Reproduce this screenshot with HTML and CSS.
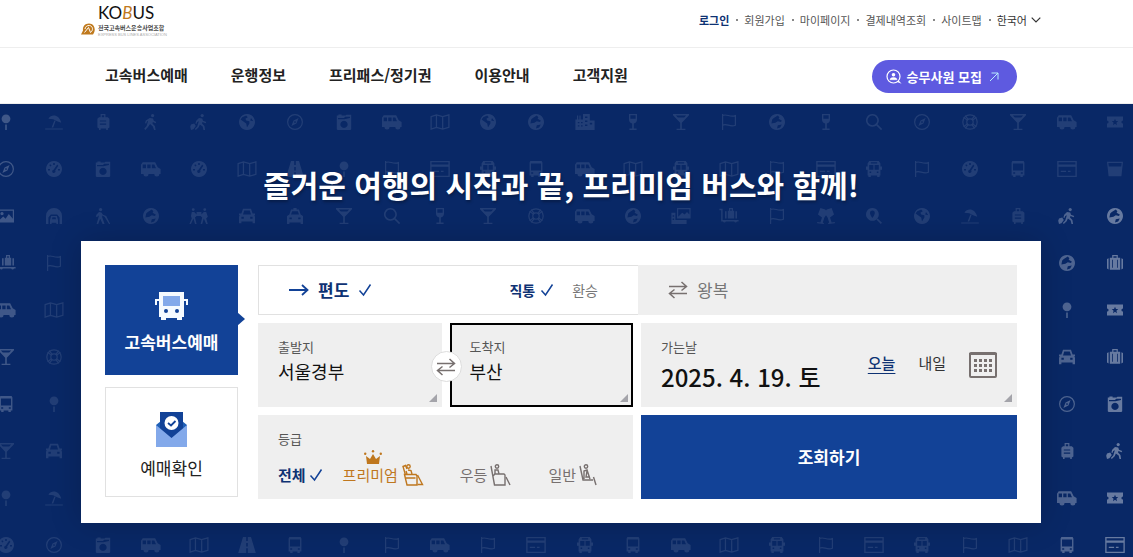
FILE: index.html
```html
<!DOCTYPE html>
<html lang="ko">
<head>
    <meta charset="UTF-8">
    <meta name="viewport" content="width=device-width, initial-scale=1.0">
    <title>고속버스통합예매</title>
    <link rel="stylesheet" href="styles.css">
</head>
<body>
    <!-- 공통 아이콘 -->
    <svg class="sprite" aria-hidden="true">
        <symbol id="i-check" viewBox="0 0 14 14"><path d="M1.5 7.500l4 4.500L12.500 1.500" fill="none" stroke="currentColor" stroke-width="1.500"/></symbol>
        <symbol id="i-arrow" viewBox="0 0 20 14"><path d="M0 7h18M13 2l5.500 5L13 12" fill="none" stroke="currentColor" stroke-width="1.800"/></symbol>
        <symbol id="i-swap" viewBox="0 0 20 18"><path d="M1 5.500h17M13.500 1l5 4.500-5 4M19 12.500H2M6.500 8.500l-5 4 5 4.500" fill="none" stroke="currentColor" stroke-width="1.500"/></symbol>

        <symbol id="pin" viewBox="0 0 20 20"><circle cx="10" cy="6" r="5.500"/><path d="M9 13h2v7H9z"/></symbol>
        <symbol id="parasol" viewBox="0 0 22 20"><path d="M4 6c4-7 14-5 16 5l-5-2-5-2.500zM11.500 8l1.500.5L10 17H8zM0 18h22v1.500H0z"/></symbol>
        <symbol id="suitcase" viewBox="0 0 20 20"><path d="M7 4V0h6v4h3l2 2v11l-2 1v2h-2v-2H7v2H5v-2l-2-1V6l2-2zm1.500 0h3V1.500h-3zM6 8v1.500h8V8zm0 4v1.500h8V12z" fill-rule="evenodd"/></symbol>
        <symbol id="walk" viewBox="0 0 20 20"><circle cx="12" cy="2" r="2"/><path d="M8.500 5l4 .5 1 3 3 1.500-.7 1.500-3.500-1.500-.5 2 3 3 1 5h-2l-1.500-4.500-3.500-3L6.500 16 3 20l-1.500-1.500 3-3.500 2-6.500-1.500 1-1 2.500-1.500-.5 1-3.500z"/></symbol>
        <symbol id="hiker" viewBox="0 0 22 20"><circle cx="15" cy="2" r="2"/><path d="M11 5l4 .5 1 3L20 10l-.7 1.500-4-1.500-.5 2 3 3 .8 5h-2l-1-4.300-3.500-2.700-1.500 3.500L7 20l-1.200-1.200 3-3.300 2-6.500-2 1-1 2.500L6.500 12l1-3.500zM1 13l4-1 2 3-3 4-3 1-1-4z"/></symbol>
        <symbol id="globe" viewBox="0 0 20 20"><path d="M10 0a10 10 0 1 0 .01 0zM4 4l5-2 2 2-3 2 1 2 4 1v3l-3 5-1-5-4-3-3-2zM15 5l3 4-4-1z" fill-rule="evenodd"/></symbol>
        <symbol id="earth" viewBox="0 0 20 20"><path d="M10 0a10 10 0 1 0 .01 0zM6 5l5-3 2 2-1 2 4 2-1 2-4-1-3 2-5 1 1-5zM11 14l5-1-2 4-4 1z" fill-rule="evenodd"/></symbol>
        <symbol id="compass" viewBox="0 0 20 20"><circle cx="10" cy="10" r="9.200" fill="none" stroke="currentColor" stroke-width="1.500"/><path d="M14.500 5l-2.700 7L5.500 15l2.700-7zM10 9a1 1 0 1 0 .01 0z" fill-rule="evenodd"/></symbol>
        <symbol id="camera" viewBox="0 0 20 20"><path d="M1 2h2V.5h4V2h5l1-1h6v18l-1 1H2l-1-1zm1.500 3v1.500h8l7-1.500V3.500h-6L10 5zM10 8.500a4.500 4.500 0 1 0 .01 0z" fill-rule="evenodd"/></symbol>
        <symbol id="van" viewBox="0 0 24 18"><path d="M2 1h15l3 6 3.500 2v6H22a3 3 0 0 1-6 0H9a3 3 0 0 1-6 0H0V4zm0 2.500V8h4V3.500zm5.500 0V8h4V3.500zm5.500 0V8h5l-2-4.500z" fill-rule="evenodd"/></symbol>
        <symbol id="map" viewBox="0 0 22 18"><path d="M1 3l6-2 7 2 7-2v14l-7 2-7-2-6 2zM7 1v14M14 3v14" fill="none" stroke="currentColor" stroke-width="1.400"/></symbol>
        <symbol id="city" viewBox="0 0 24 20"><path d="M0 7h2V2h1.500v5H5V2h1.500v5h3V0H18v8h6v12H0zm3 3v1.500h2V10zm4 0v1.500h2V10zm-4 4v1.500h2V14zm4 0v1.500h2V14zm5-11v2h3V3zm0 5v2h3V8zm0 5v2h3v-2zm6-2v2h3v-2z" fill-rule="evenodd"/></symbol>
        <symbol id="wine" viewBox="0 0 20 20"><path d="M5 0h10v7c0 3-1.700 4.500-4 5v6h3.500v2h-9v-2H9v-6c-2.300-.5-4-2-4-5zM6.700 1.500V6h6.600V1.500z" fill-rule="evenodd"/></symbol>
        <symbol id="cocktail" viewBox="0 0 20 20"><path d="M0 0h20v1.500L11 11v7.500h4.500V20h-11v-1.500H9V11L0 1.500zm3.500 1.800L6 4.500h8l2.500-2.700z" fill-rule="evenodd"/></symbol>
        <symbol id="flag" viewBox="0 0 20 20"><path d="M2 0v20M2 2c5-3 9 3 16 0v12c-7 3-11-3-16 0" fill="none" stroke="currentColor" stroke-width="1.500"/></symbol>
        <symbol id="search" viewBox="0 0 20 20"><path d="M8 1a7 7 0 1 0 .01 0zM13 13l6.500 6.500" fill="none" stroke="currentColor" stroke-width="2"/></symbol>
        <symbol id="findpin" viewBox="0 0 20 20"><path d="M8 0a8 8 0 1 0 .01 0zM8 3a3 3 0 0 1 3 3C11 9 8 12.500 8 12.500S5 9 5 6a3 3 0 0 1 3-3zM13 14.500l1.500-1.500 5.500 5.500-1.500 1.500z" fill-rule="evenodd"/></symbol>
        <symbol id="ring" viewBox="0 0 20 20"><g fill="none" stroke="currentColor" stroke-width="1.500"><circle cx="10" cy="10" r="9"/><circle cx="10" cy="10" r="4"/><path d="M2 4l5 4M4 2l4 5M18 4l-5 4M16 2l-4 5M2 16l5-4M4 18l4-5M18 16l-5-4M16 18l-4-5"/></g></symbol>
        <symbol id="ticket" viewBox="0 0 20 20"><path d="M0 3h20v5a2 2 0 0 0 0 4v5H0v-5a2 2 0 0 0 0-4zm10 3L8.800 8.800H6l2.200 2L7.500 14l2.500-1.700 2.500 1.700-.7-3.200 2.200-2h-2.800z" fill-rule="evenodd"/></symbol>
        <symbol id="gauge" viewBox="0 0 20 20"><path d="M10 0a10 10 0 1 0 .01 0zM9 2.500V5h2V2.500zM4 5l1.500 2L7 6 5.500 4zM2.500 10v2H5v-2zM15 10v2h2.500v-2zM14 4.500L9.500 11a2 2 0 1 0 2 1L15.500 6z" fill-rule="evenodd"/></symbol>
        <symbol id="road" viewBox="0 0 22 20"><path d="M6 0h4v5h2V0h4l6 20H12v-6h-2v6H0zM10 7.500V12h2V7.500z" fill-rule="evenodd"/></symbol>
        <symbol id="card" viewBox="0 0 22 18"><path d="M0 0h22v18H0zm1.500 1.500V4h19V1.500zm0 5v10h19v-10zM4 11h6v1.500H4zm8 0h3v1.500h-3z" fill-rule="evenodd"/></symbol>
        <symbol id="bus" viewBox="0 0 20 20"><path d="M4 0h12l2 3v4h2v4h-2v7h-1v2h-3v-2H6v2H3v-2H2v-7H0V7h2V3zm2 1.500V3h8V1.500zM4 5v6h5.300V5zm6.700 0v6H16V5zM4.500 13v2h2v-2zm9 0v2h2v-2z" fill-rule="evenodd"/></symbol>
        <symbol id="tram" viewBox="0 0 20 20"><path d="M3 0h14l1 2v16h-2v2h-3v-2H7v2H4v-2H2V2zm.7 3v9h12.600V3zM4 14v2h2.500v-2zm9.500 0v2H16v-2z" fill-rule="evenodd"/></symbol>
        <symbol id="basket" viewBox="0 0 20 20"><path d="M0 1h20l-2 18H2zm1.700 1.500L2.200 7h15.600l.5-4.500z" fill-rule="evenodd"/></symbol>
        <symbol id="picture" viewBox="0 0 20 20"><path d="M0 2h20v16H0zm1.500 1.500v12l5-5 3 3 4-6 5 6v-10zM5 5a2 2 0 1 0 .01 0z" fill-rule="evenodd"/></symbol>
        <symbol id="photos" viewBox="0 0 24 20"><path d="M7 0h17v13H7zm1.500 1.500V11l5-5 3 2 3-3 3 3V1.500zM0 6h5v9h14v5H0zm1.500 3v2h2V9zm0 4v2h2v-2z" fill-rule="evenodd"/></symbol>
        <symbol id="tunnel" viewBox="0 0 20 20"><path d="M0 20V10a10 10 0 0 1 20 0v10h-3v-8l-3-4H6l-3 4v8zM5 20v-5l1.500-5h7l1.500 5v5h-2v-1.500H7V20zm3-8.500L7.500 14h5l-.5-2.500z" fill-rule="evenodd"/></symbol>
        <symbol id="cane" viewBox="0 0 20 20"><circle cx="7" cy="2" r="2"/><path d="M5 5l3 .5 2 3 4 1.500 5 10h-1.500L12 11l-3-1.500v2l3 8.500H9.500L6.500 13.500 4 20H2l2-7 1-4-2 2H1l1-3z"/></symbol>
        <symbol id="friends" viewBox="0 0 24 20"><path d="M3 2a1.800 1.800 0 1 0 3.600 0A1.800 1.800 0 1 0 3 2zM17.400 2A1.800 1.800 0 1 0 21 2a1.800 1.800 0 1 0-3.600 0zM3 5h3l3 3V5h6v3l3-3h3l2 6-2 2 2 7h-2l-3-7-2 7h-2l2-8-2-2H9l-2 2 2 8H7l-2-7-3 7H0l3-7-1-3z"/></symbol>
        <symbol id="car" viewBox="0 0 20 20"><path d="M5 1h10l2 6h3v2h-1l1 2v8h-3v-2H3v2H0v-8l1-2H0V7h3zm1.500 2L5 8h10l-1.500-5zM3 11v2.500h3V11zm11 0v2.500h3V11z" fill-rule="evenodd"/></symbol>
        <symbol id="taxi" viewBox="0 0 20 20"><path d="M8 0h4v2h3l2 6 3 2v10h-3v-2H3v2H0V10l3-2 2-6h3zM6.500 4L5 8h10l-1.500-4zM3 12v2h3v-2zm11 0v2h3v-2z" fill-rule="evenodd"/></symbol>
        <symbol id="cart" viewBox="0 0 24 20"><path d="M0 1h4v14h20v1.800h-2a1.800 1.800 0 0 1-3.500 0H8a1.800 1.800 0 0 1-3.500 0H2.200V2.800H0zM7 4h2v9H7zm3.500-.5H12V0h5v3.500h1.500V13h-8zM13.500 1.500v2h2v-2zM20 4h2v9h-2z" fill-rule="evenodd"/></symbol>
        <symbol id="toast" viewBox="0 0 24 20"><path d="M5 0l6 2 1 1 1-1 6-2 3 8-5 4 2 6 4-.5V19l-8 1-.5-1 1.500-1-2-6-2-3-2 3-2 6 1.500 1-.5 1-8-1v-1.500l4 .5 2-6-5-4z"/></symbol>
        <symbol id="luggage" viewBox="0 0 20 20"><path d="M0 5l2-1v14l-2-1zM3.500 3.500h3V0h7v3.500h3v15h-13zM8 1.500v2h4v-2zM18 4l2 1v12l-2 1zM6.500 6v10h1V6zm6 0v10h1V6z" fill-rule="evenodd"/></symbol>
    </svg>

    <header class="header">
        <div class="header-top wrap">
            <a class="logo" href="#" aria-label="KOBUS 전국고속버스운송사업조합">
                <svg class="logo-mark" viewBox="0 0 14 12"><path d="M0 11.500h12C15.500 7 13.500.5 8 .5 3.500.5 1.500 4 2 7.500z" fill="#c07a1e"/><path d="M3.500 9.500L7.500 4.500 9.500 9.500C12.500 7.500 12 3 8.500 2.500 6 2.200 4.200 4 4 6" fill="none" stroke="#fff"/></svg>
                <span class="logo-text">
                    <strong class="logo-name">KO<em>B</em>US</strong>
                    <span class="logo-sub">전국고속버스운송사업조합</span>
                    <span class="logo-eng">EXPRESS BUS LINES ASSOCIATION</span>
                </span>
            </a>
            <ul class="util">
                <li><a class="login" href="#">로그인</a></li>
                <li><a href="#">회원가입</a></li>
                <li><a href="#">마이페이지</a></li>
                <li><a href="#">결제내역조회</a></li>
                <li><a href="#">사이트맵</a></li>
                <li><button class="lang" type="button">한국어 <svg viewBox="0 0 10 6"><path d="M.7.7L5 5 9.300.7" fill="none" stroke="#333" stroke-width="1.200"/></svg></button></li>
            </ul>
        </div>
        <div class="header-nav">
            <nav class="gnb wrap">
                <ul>
                    <li><a href="#">고속버스예매</a></li>
                    <li><a href="#">운행정보</a></li>
                    <li><a href="#">프리패스/정기권</a></li>
                    <li><a href="#">이용안내</a></li>
                    <li><a href="#">고객지원</a></li>
                </ul>
                <a class="recruit" href="#">
                    <svg class="recruit-user" viewBox="0 0 16 16"><circle cx="7.500" cy="7.500" r="6.500" fill="none" stroke="#fff" stroke-width="1.200"/><circle cx="7.500" cy="5.700" r="1.800" fill="#fff"/><path d="M4 10.700c0-3 7-3 7 0zM11 13l1.500-1.500 2.500 3" fill="#fff" stroke="#fff" stroke-width=".5"/></svg>
                    승무사원 모집
                    <svg class="recruit-go" viewBox="0 0 10 10"><path d="M1 9L9 1M2.500 1H9v6.500" fill="none" stroke="#b9ecff"/></svg>
                </a>
            </nav>
        </div>
    </header>

    <main class="hero">
        <div class="pattern" id="pattern" aria-hidden="true"></div>
        <h1>즐거운 여행의 시작과 끝, 프리미엄 버스와 함께!</h1>

        <div class="panel wrap">
            <div class="tabs">
                <button class="tab active" type="button">
                    <svg class="tab-bus" viewBox="0 0 33 29"><path d="M4 0h25v25h-2v3h-5v-2H11v2H6v-3H4zM0 7h4v2H2v4H0zM29 7h4v6h-2V9h-2z" fill="#f5faff"/><path d="M8 4h17v10H8z" fill="#83a9ea"/><circle cx="11" cy="19" r="2" fill="#124297"/><circle cx="22" cy="19" r="2" fill="#124297"/></svg>
                    고속버스예매
                </button>
                <button class="tab" type="button">
                    <svg class="tab-mail" viewBox="0 0 31 36"><path d="M0 14l5-4h21l5 4v22H0z" fill="#1f5fb5"/><path d="M4 1h23v19L15.500 30 4 20z" fill="#124297"/><path d="M0 14l15.500 13L31 14v22H0z" fill="#83a9ea"/><circle cx="15.500" cy="12" r="7" fill="#fff"/><path d="M12 12l3 2.500 4.500-4.500" fill="none" stroke="#124297" stroke-width="1.800"/></svg>
                    예매확인
                </button>
            </div>

            <form class="booking">
                <div class="trip">
                    <div class="oneway">
                        <label class="trip-type on"><input type="radio" name="trip" checked><svg class="ico-arrow"><use href="#i-arrow"/></svg>편도<svg class="ico-check"><use href="#i-check"/></svg></label>
                        <div class="route">
                            <label class="on"><input type="radio" name="route" checked>직통<svg class="ico-check"><use href="#i-check"/></svg></label>
                            <label><input type="radio" name="route">환승</label>
                        </div>
                    </div>
                    <div class="round">
                        <label class="trip-type"><input type="radio" name="trip"><svg class="ico-swap"><use href="#i-swap"/></svg>왕복</label>
                    </div>
                </div>

                <div class="places">
                    <button class="field" type="button"><span class="name">출발지</span><span class="value">서울경부</span></button>
                    <button class="field focus" type="button"><span class="name">도착지</span><span class="value">부산</span></button>
                    <button class="swap" type="button" aria-label="출발지 도착지 교체"><svg class="ico-swap"><use href="#i-swap"/></svg></button>
                </div>
                <div class="field date">
                    <div class="date-text"><span class="name">가는날</span><span class="date-value">2025. 4. 19. 토</span></div>
                    <div class="date-tools">
                        <button class="day on" type="button">오늘</button>
                        <button class="day" type="button">내일</button>
                        <button class="calendar" type="button" aria-label="달력">
                            <svg viewBox="0 0 28 26"><rect x="1" y="1" width="26" height="24" rx="1" fill="none" stroke="#77706f" stroke-width="2"/><path d="M0 2h28" stroke="#77706f" stroke-width="2"/><path d="M5 8.500h18M5 13.500h18M5 18.500h18" stroke="#77706f" stroke-width="3" stroke-dasharray="3 2"/></svg>
                        </button>
                    </div>
                </div>

                <fieldset class="grade">
                    <legend class="name">등급</legend>
                    <div class="grade-list">
                        <label class="all"><input type="radio" name="grade" checked>전체<svg class="ico-check"><use href="#i-check"/></svg></label>
                        <label class="premium"><input type="radio" name="grade">
                            <svg class="crown" viewBox="0 0 18 14"><path d="M3 14L2 6l4 3 3-5 3 5 4-3-1 8z" fill="#bf771e"/><circle cx="1.200" cy="3.700" r="1.200" fill="#bf771e"/><circle cx="9" cy="1.300" r="1.200" fill="#bf771e"/><circle cx="16.800" cy="3.700" r="1.200" fill="#bf771e"/></svg>
                            프리미엄
                            <svg class="seat" viewBox="0 0 22 22"><g fill="none" stroke="currentColor" stroke-width="1.400"><path d="M3.500 11L1 2.500l2.500-1L5 5M2.500 10.500L5 21h10V12l-1-1.500zM4 14h9.500"/><circle cx="6.500" cy="2.500" r="1.700"/><path d="M4 7l1 3M6 6l3 .5 1 3.500M15.500 11l5 9.500h-5"/></g></svg>
                        </label>
                        <label class="plain"><input type="radio" name="grade">우등
                            <svg class="seat" viewBox="0 0 22 22"><g fill="none" stroke="currentColor" stroke-width="1.400"><path d="M1 2l3.500 19H15V11l-1-1H5L3 12"/><circle cx="7" cy="2.500" r="1.700"/><path d="M5 10V6h3l1 4M16 13l4 8"/></g></svg>
                        </label>
                        <label class="plain"><input type="radio" name="grade">일반
                            <svg class="seat seat-narrow" viewBox="0 0 18 22"><g fill="none" stroke="currentColor" stroke-width="1.400"><path d="M1 2l3 14h10M5 15V7l3-1 3 9M8 7l-1 6h4"/><circle cx="7" cy="2.500" r="1.700"/><path d="M14.500 13l2.500 8"/></g></svg>
                        </label>
                    </div>
                </fieldset>
                <button class="submit" type="button">조회하기</button>
            </form>
        </div>
    </main>

    <script>
        // 배경 아이콘 ("-" 는 예매 박스에 가려지는 칸)
        const hidden = ' -'.repeat(20) + ' ';
        const rows = [
            'pin parasol suitcase walk hiker globe compass camera van map globe earth city wine cocktail flag earth wine search compass ring cocktail van ticket',
            'compass gauge camera van gauge map road pin flag card bus tram van map bus map flag card bus flag gauge tram card basket',
            'picture tunnel cane earth friends car taxi cocktail search wine cocktail ring van earth photos cart flag toast findpin globe parasol suitcase hiker earth',
            'cart flag' + hidden + 'earth luggage',
            'van map' + hidden + 'pin ticket',
            'cocktail ring' + hidden + 'car luggage',
            'tram pin' + hidden + 'compass camera',
            'cocktail car' + hidden + 'suitcase hiker',
            'pin parasol' + hidden + 'van ticket',
            'gauge compass camera van map road tram pin flag van flag card bus tram van map bus flag card bus flag map tram card'
        ];

        let html = '';
        rows.forEach((row, r) => {
            row.split(' ').forEach((name, c) => {
                let light = '';
                if (c === 0 && r < 7) light = 'soft';
                if (c === 22 && r > 1) light = 'mid';
                if (c === 23 && r > 1) light = 'bright';
                html += name === '-' ? '<span></span>' : `<svg class="${light}"><use href="#${name}"/></svg>`;
            });
        });
        document.getElementById('pattern').innerHTML = html;
    </script>
</body>
</html>
```

FILE: styles.css
```css
* {
    box-sizing: border-box;
}

body {
    margin: 0;
    min-height: 100vh;
    display: flex;
    flex-direction: column;
    overflow-x: hidden;
    font-family: "Noto Sans CJK KR", "Noto Sans", sans-serif;
    font-size: 15px;
    line-height: 20px;
    color: #222;
    background: #fff;
}

ul {
    list-style: none;
    margin: 0;
    padding: 0;
}

a {
    color: inherit;
    text-decoration: none;
}

button {
    margin: 0;
    padding: 0;
    border: 0;
    background: none;
    color: inherit;
    font: inherit;
    cursor: pointer;
}

label {
    display: flex;
    align-items: center;
    cursor: pointer;
}

label input {
    appearance: none;
    position: absolute;
    width: 1px;
    height: 1px;
    margin: 0;
    opacity: 0;
}

svg {
    display: block;
    flex: none;
}

.sprite {
    position: absolute;
    width: 0;
    height: 0;
}

.wrap {
    width: 100%;
    max-width: 960px;
    margin: 0 auto;
}

/* 헤더 */
.header {
    border-bottom: 1px solid #eee;
}

.header-top,
.header-nav,
.hero {
    padding-right: 11px;
}

.header-top {
    max-width: 971px;
    height: 47px;
    display: flex;
    justify-content: space-between;
    align-items: flex-start;
}

.logo {
    display: flex;
    align-items: flex-end;
    gap: 3px;
    padding-top: 3px;
}

.logo-mark {
    width: 14px;
    height: 12px;
    margin-bottom: 2px;
}

.logo-text {
    display: flex;
    flex-direction: column;
    white-space: nowrap;
}

.logo-name {
    font-family: "Liberation Sans Narrow", "Lato", sans-serif;
    font-size: 17px;
    line-height: 20px;
    font-weight: normal;
    color: #111;
}

.logo-name em {
    color: #c07a1e;
}

.logo-sub {
    font-size: 6px;
    line-height: 9px;
    font-weight: bold;
    color: #444;
}

.logo-eng {
    font-family: "Liberation Sans", sans-serif;
    font-size: 4px;
    line-height: 5px;
    color: #aaa;
}

.util {
    display: flex;
    padding-top: 10px;
    font-size: 11px;
    color: #555;
}

.util li {
    display: flex;
    align-items: center;
}

.util li + li::before {
    content: "";
    width: 2px;
    height: 2px;
    margin: 0 6px 0 7px;
    background: #888;
}

.util .login {
    font-weight: bold;
    color: #0e3273;
}

.lang {
    display: flex;
    align-items: center;
    gap: 4px;
    color: #333;
}

.lang svg {
    width: 10px;
    height: 6px;
}

.header-nav {
    border-top: 1px solid #eee;
}

.gnb {
    height: 55px;
    padding: 0 24px;
    display: flex;
    justify-content: space-between;
    align-items: center;
}

.gnb ul {
    display: flex;
    gap: 43px;
    padding-bottom: 2px;
    font-weight: bold;
}

.recruit {
    height: 33px;
    padding: 0 18px 0 14px;
    display: flex;
    align-items: center;
    gap: 5px;
    margin-top: 2px;
    border-radius: 17px;
    background: #5e5ae0;
    color: #fff;
    font-size: 13px;
    font-weight: bold;
}

.recruit-user {
    width: 16px;
    height: 16px;
}

.recruit-go {
    width: 10px;
    height: 10px;
    margin-left: 2px;
}

/* 메인 */
.hero {
    flex: 1;
    position: relative;
    overflow: hidden;
    padding-bottom: 34px;
    background: #092866;
}

.pattern {
    position: absolute;
    top: -6px;
    left: -18px;
    right: -6px;
    display: grid;
    grid-template-columns: repeat(24, 1fr);
    grid-auto-rows: 47px;
    place-items: center;
    color: #fff;
    fill: currentColor;
}

.pattern svg {
    width: 20px;
    height: 16px;
    opacity: 0.1;
}

.pattern .soft {
    opacity: 0.22;
}

.pattern .mid {
    opacity: 0.28;
}

.pattern .bright {
    opacity: 0.38;
}

.hero h1 {
    position: relative;
    margin: 0;
    padding: 58px 0 35px;
    font-size: 30px;
    line-height: 44px;
    text-align: center;
    color: #fff;
    text-shadow: 1px 2px 3px rgba(0, 0, 0, 0.3);
}

.panel {
    position: relative;
    padding: 24px;
    display: flex;
    align-items: flex-start;
    gap: 20px;
    background: #fff;
    box-shadow: 0 0 30px rgba(0, 0, 0, 0.2);
}

.tabs {
    width: 133px;
    flex: none;
    display: flex;
    flex-direction: column;
    gap: 12px;
}

.tab {
    position: relative;
    height: 110px;
    padding-top: 4px;
    display: flex;
    flex-direction: column;
    align-items: center;
    justify-content: center;
    gap: 11px;
    border: 1px solid #e1e1e1;
    font-size: 17px;
}

.tab.active {
    border-color: #124297;
    background: #124297;
    color: #fff;
    font-weight: bold;
}

.tab.active::after {
    content: "";
    position: absolute;
    top: 46px;
    left: 100%;
    border: 7px solid transparent;
    border-left: 8px solid #124297;
    border-right: 0;
}

.tab-bus {
    width: 33px;
    height: 29px;
}

.tab-mail {
    width: 31px;
    height: 36px;
}

.booking {
    flex: 1;
    display: grid;
    grid-template-columns: 375px 1fr;
    grid-template-rows: 50px 84px 84px;
    gap: 8px;
}

.on {
    color: #0e3273;
    font-weight: bold;
}

.ico-check {
    width: 14px;
    height: 14px;
    color: #124297;
}

.ico-arrow {
    width: 20px;
    height: 14px;
    color: #124297;
}

.ico-swap {
    width: 20px;
    height: 18px;
    color: #77706f;
}

/* 편도, 왕복 */
.trip {
    grid-column: 1 / 3;
    display: flex;
}

.oneway,
.round {
    flex: 1;
    display: flex;
    align-items: center;
    justify-content: space-between;
    padding: 0 40px 0 30px;
    color: #777;
}

.oneway {
    border: 1px solid #e1e1e1;
    border-right: 0;
}

.round {
    background: #efefef;
}

.trip-type {
    gap: 9px;
    font-size: 17px;
}

.route {
    display: flex;
    gap: 18px;
    font-size: 14px;
}

.route label {
    gap: 5px;
}

/* 출발지, 도착지, 가는날 */
.places {
    position: relative;
    display: grid;
    grid-template-columns: 1fr 1fr;
    gap: 8px;
}

.field {
    position: relative;
    padding: 14px 20px;
    background: #efefef;
    text-align: left;
    display: flex;
    flex-direction: column;
}

.field::after {
    content: "";
    position: absolute;
    right: 5px;
    bottom: 5px;
    border-left: 8px solid transparent;
    border-bottom: 8px solid #a4a4aa;
}

.field.focus {
    outline: 2px solid #000;
    outline-offset: -2px;
}

.name {
    font-size: 13px;
    line-height: 20px;
    color: #555;
}

.value {
    margin-top: 1px;
    font-size: 18px;
    line-height: 26px;
    color: #111;
}

.swap {
    position: absolute;
    top: 28px;
    left: calc(50% - 15px);
    width: 31px;
    height: 31px;
    display: flex;
    align-items: center;
    justify-content: center;
    border: 1px solid #ddd;
    border-radius: 50%;
    background: #fff;
}

.date {
    flex-direction: row;
    justify-content: space-between;
    align-items: flex-start;
}

.date-text {
    display: flex;
    flex-direction: column;
}

.date-value {
    font-size: 24px;
    line-height: 40px;
    font-weight: 500;
    color: #111;
}

.date-tools {
    display: flex;
    align-items: center;
    padding-top: 15px;
}

.day {
    margin-right: 23px;
    padding-bottom: 4px;
    color: #333;
}

.day.on {
    color: #0e3273;
    font-weight: 500;
    text-decoration: underline;
    text-underline-offset: 4px;
}

.calendar svg {
    width: 28px;
    height: 26px;
}

/* 등급 */
.grade {
    min-width: 0;
    margin: 0;
    padding: 14px 20px;
    border: 0;
    background: #efefef;
}

.grade legend {
    float: left;
    width: 100%;
    padding: 0;
}

.grade-list {
    clear: both;
    display: flex;
    gap: 20px;
    padding-top: 15px;
    color: #77706f;
}

.grade .all {
    gap: 3px;
    color: #0e3273;
    font-weight: bold;
}

.grade .premium {
    position: relative;
    gap: 4px;
    color: #bf771e;
}

.grade .plain {
    gap: 3px;
    margin-left: 16px;
}

.crown {
    position: absolute;
    left: 21px;
    bottom: 22px;
    width: 18px;
    height: 14px;
}

.seat {
    width: 22px;
    height: 22px;
}

.seat-narrow {
    width: 18px;
}

.submit {
    background: #124297;
    color: #fff;
    font-size: 17px;
    font-weight: bold;
}
```
